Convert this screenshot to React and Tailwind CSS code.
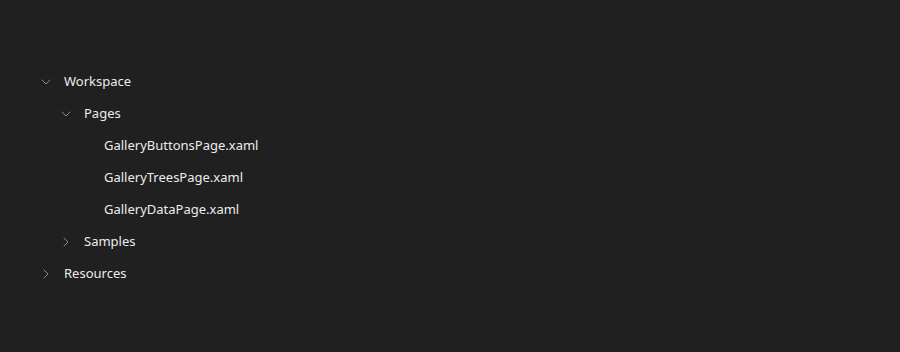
import { ChevronDown, ChevronRight } from "lucide-react";

const rows = [
  { label: "Workspace", level: 0, open: true },
  { label: "Pages", level: 1, open: true },
  { label: "GalleryButtonsPage.xaml", level: 2 },
  { label: "GalleryTreesPage.xaml", level: 2 },
  { label: "GalleryDataPage.xaml", level: 2 },
  { label: "Samples", level: 1, open: false },
  { label: "Resources", level: 0, open: false },
];

const indent = ["pl-[38px]", "pl-[58px]", "pl-[78px]"];

function Row({ label, level, open }) {
  const leaf = open === undefined;
  return (
    <div className={`flex h-8 items-center ${indent[level]}`}>
      <span className="flex w-4 items-center justify-center text-[#a8a8a8]">
        {leaf ? null : open ? (
          <ChevronDown size={18} strokeWidth={1.2} />
        ) : (
          <ChevronRight size={18} strokeWidth={1.2} />
        )}
      </span>
      <span className="ml-[10px] text-[13px] text-[#ececec]">{label}</span>
    </div>
  );
}

export default function App() {
  return (
    <div
      className="h-[352px] w-[900px] bg-[#202020] pt-[66px]"
      style={{ fontFamily: '"Noto Sans", "Open Sans", sans-serif' }}
    >
      {rows.map((r) => (
        <Row key={r.label} {...r} />
      ))}
    </div>
  );
}
